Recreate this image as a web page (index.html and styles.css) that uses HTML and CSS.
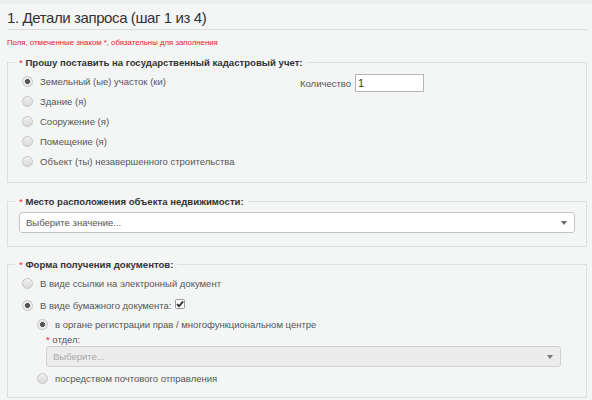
FILE: index.html
```html
<!DOCTYPE html>
<html lang="ru">
<head>
<meta charset="utf-8">
<title>Детали запроса</title>
<link rel="stylesheet" href="styles.css">
</head>
<body>
<div class="topbar"></div>
<div class="page">
  <h1 class="title">1. Детали запроса (шаг 1 из 4)</h1>
  <p class="notice">Поля, отмеченные знаком *, обязательны для заполнения</p>

  <fieldset class="group group-1">
    <legend class="legend"><span class="req">*</span> Прошу поставить на государственный кадастровый учет:</legend>
    <div class="body body-1">
      <div class="options">
        <div class="row"><span class="radio checked"></span><span class="lbl">Земельный (ые) участок (ки)</span></div>
        <div class="row"><span class="radio"></span><span class="lbl">Здание (я)</span></div>
        <div class="row"><span class="radio"></span><span class="lbl">Сооружение (я)</span></div>
        <div class="row"><span class="radio"></span><span class="lbl">Помещение (я)</span></div>
        <div class="row"><span class="radio"></span><span class="lbl">Объект (ты) незавершенного строительства</span></div>
      </div>
      <div class="qty">
        <span class="lbl">Количество</span>
        <span class="input">1</span>
      </div>
    </div>
  </fieldset>

  <fieldset class="group group-2">
    <legend class="legend"><span class="req">*</span> Место расположения объекта недвижимости:</legend>
    <div class="body body-2">
      <div class="select">
        <span class="select-text">Выберите значение...</span>
        <span class="caret"></span>
      </div>
    </div>
  </fieldset>

  <fieldset class="group group-3">
    <legend class="legend"><span class="req">*</span> Форма получения документов:</legend>
    <div class="body body-3">
      <div class="row row-a"><span class="radio"></span><span class="lbl">В виде ссылки на электронный документ</span></div>
      <div class="row row-b"><span class="radio checked"></span><span class="lbl">В виде бумажного документа:</span>
        <svg class="check" width="10" height="10" viewBox="0 0 10 10">
          <rect x="0.5" y="0.5" width="9" height="9" rx="1" fill="#fff" stroke="#9a9a9a"/>
          <path d="M2 5.2 L4 7.2 L8.2 2.4" fill="none" stroke="#333" stroke-width="1.8"/>
        </svg>
      </div>
      <div class="sub">
        <div class="row row-c"><span class="radio checked"></span><span class="lbl">в органе регистрации прав / многофункциональном центре</span></div>
        <div class="dept">
          <div class="dept-label"><span class="req">*</span> отдел:</div>
          <div class="select select-disabled">
            <span class="select-text">Выберите...</span>
            <span class="caret"></span>
          </div>
        </div>
        <div class="row row-d"><span class="radio"></span><span class="lbl">посредством почтового отправления</span></div>
      </div>
    </div>
  </fieldset>
</div>
</body>
</html>
```

FILE: styles.css
```css
html, body {
  margin: 0;
  padding: 0;
}
body {
  background: #f4f5f5;
  font-family: "Liberation Sans", Arial, sans-serif;
  color: #555;
  width: 592px;
  height: 400px;
  overflow: hidden;
}
.topbar {
  height: 4px;
  background: #eceded;
}
.page {
  padding: 0 5px 0 7px;
}
.title {
  margin: 0;
  padding-top: 4px;
  height: 26px;
  box-sizing: border-box;
  font-size: 15px;
  letter-spacing: -0.4px;
  line-height: 20px;
  font-weight: normal;
  color: #333;
  border-bottom: 1px solid #dcdddd;
}
.notice {
  margin: 8px 0 0;
  font-size: 7.8px;
  line-height: 10px;
  color: #e8202a;
}
.group {
  margin: 0;
  border: 1px solid #dedfdf;
  padding: 0;
  min-width: 0;
}
.legend {
  padding: 0 4px;
  margin-left: 7px;
  font-size: 9.6px;
  line-height: 13px;
  font-weight: bold;
  color: #333;
}
.req {
  color: #e8202a;
  font-weight: normal;
}
.group-1 {
  margin-top: 8px;
}
.body-1 {
  display: flex;
  padding: 2px 11px 11px 14px;
}
.options {
  width: 278px;
}
.row {
  display: flex;
  align-items: center;
  height: 20px;
}
.radio {
  width: 11px;
  height: 11px;
  box-sizing: border-box;
  border-radius: 50%;
  border: 1px solid #c6c6c6;
  background: linear-gradient(#f0f0f0, #dadada);
  margin-right: 7px;
  flex: none;
}
.radio.checked {
  background: radial-gradient(circle, #555 0, #555 2.2px, #e6e6e6 2.8px, #f4f4f4 100%);
}
.lbl {
  font-size: 9.5px;
  line-height: 13px;
  color: #555;
}
.qty {
  display: flex;
  align-items: center;
  height: 20px;
  margin-top: 2px;
}
.input {
  margin-left: 4px;
  width: 69px;
  height: 18px;
  box-sizing: border-box;
  background: #fff;
  border: 1px solid #b5b5b5;
  font-size: 11px;
  line-height: 16px;
  padding-left: 2px;
  color: #333;
}
.group-2 {
  margin-top: 12px;
}
.body-2 {
  padding: 4px 11px 13px 11px;
}
.select {
  height: 21px;
  box-sizing: border-box;
  background: #fff;
  border: 1px solid #c4c4c4;
  border-radius: 3px;
  display: flex;
  align-items: center;
  justify-content: space-between;
  padding: 0 6px;
}
.select-text {
  font-size: 9.5px;
  color: #555;
}
.caret {
  width: 0;
  height: 0;
  border-left: 3.5px solid transparent;
  border-right: 3.5px solid transparent;
  border-top: 4px solid #666;
  margin-right: 1px;
}
.group-3 {
  margin-top: 11px;
}
.body-3 {
  padding: 2px 11px 9px 14px;
}
.row-b {
  margin-top: 2px;
}
.check {
  margin-left: 3px;
  margin-top: -2px;
}
.sub {
  padding-left: 15px;
}
.row-c {
  height: 19px;
}
.dept {
  padding-left: 9px;
  padding-right: 14px;
}
.dept-label {
  font-size: 9.5px;
  line-height: 12px;
  color: #555;
}
.select-disabled {
  background: #ececec;
  border-color: #cfcfcf;
}
.select-disabled .select-text {
  color: #aaa;
}
.select-disabled .caret {
  border-top-color: #777;
}
.row-d {
  margin-top: 1px;
}
```
